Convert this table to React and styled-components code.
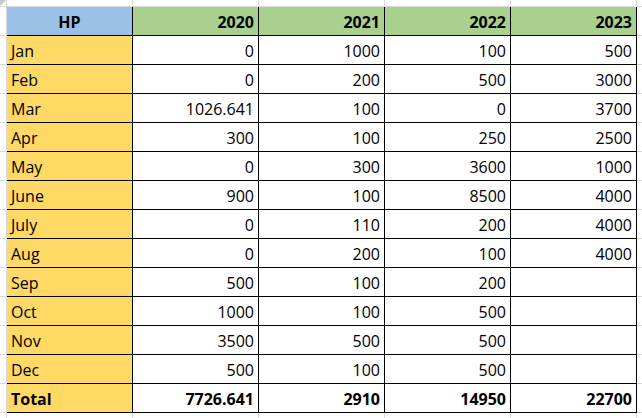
import React from 'react'
import styled, { createGlobalStyle } from 'styled-components'

const GlobalStyle = createGlobalStyle`
    html, body {
        margin: 0;
        padding: 0;
        background: #fff;
    }
    body {
        font-family: "Open Sans", "Liberation Sans", sans-serif;
        color: #000;
    }
`

// excel-ish sheet with faint gridlines behind the table
const Sheet = styled.div`
    position: relative;
    width: 642px;
    height: 418px;
    overflow: hidden;
    box-sizing: border-box;
    padding: 7px 0 0 7px;
    background-color: #fff;
    background-image:
        repeating-linear-gradient(to right, #d9d9d9 0 1px, transparent 1px 126px),
        repeating-linear-gradient(to bottom, #d9d9d9 0 1px, transparent 1px 29px);
    background-position: 6px 0, 0 6px;
`

const Corner = styled.div`
    position: absolute;
    top: 0;
    left: 0;
    width: 0;
    height: 0;
    border-top: 6px solid #c8c8c8;
    border-right: 6px solid transparent;
`

const Grid = styled.div`
    display: grid;
    grid-template-columns: repeat(5, 126px);
    grid-auto-rows: 29px;
    width: max-content;
`

const Cell = styled.div`
    box-sizing: border-box;
    border-right: 1px solid #000;
    border-bottom: 1px solid #000;
    padding: 3px 4px 0 4px;
    line-height: 25px;
    font-size: 16px;
    white-space: nowrap;
    font-weight: ${props => props.bold ? 700 : 400};
    text-align: ${props => props.align || 'right'};
    background: ${props => props.bg || '#fff'};
`

const BLUE = '#9BC2E6'
const GREEN = '#A9D08E'
const YELLOW = '#FFD966'

const years = ['2020', '2021', '2022', '2023']

const rows = [
    ['Jan', '0', '1000', '100', '500'],
    ['Feb', '0', '200', '500', '3000'],
    ['Mar', '1026.641', '100', '0', '3700'],
    ['Apr', '300', '100', '250', '2500'],
    ['May', '0', '300', '3600', '1000'],
    ['June', '900', '100', '8500', '4000'],
    ['July', '0', '110', '200', '4000'],
    ['Aug', '0', '200', '100', '4000'],
    ['Sep', '500', '100', '200', ''],
    ['Oct', '1000', '100', '500', ''],
    ['Nov', '3500', '500', '500', ''],
    ['Dec', '500', '100', '500', ''],
]

const total = ['Total', '7726.641', '2910', '14950', '22700']

export default function App() {
    return (
        <>
            <GlobalStyle />
            <Sheet>
                <Corner />
                <Grid>
                    <Cell bg={BLUE} bold align="center">HP</Cell>
                    {years.map(y => (
                        <Cell key={y} bg={GREEN} bold>{y}</Cell>
                    ))}

                    {rows.map(r => (
                        <React.Fragment key={r[0]}>
                            <Cell bg={YELLOW} align="left">{r[0]}</Cell>
                            {r.slice(1).map((v, i) => (
                                <Cell key={i}>{v}</Cell>
                            ))}
                        </React.Fragment>
                    ))}

                    <Cell bg={YELLOW} bold align="left">{total[0]}</Cell>
                    {total.slice(1).map((v, i) => (
                        <Cell key={i} bold>{v}</Cell>
                    ))}
                </Grid>
            </Sheet>
        </>
    )
}
